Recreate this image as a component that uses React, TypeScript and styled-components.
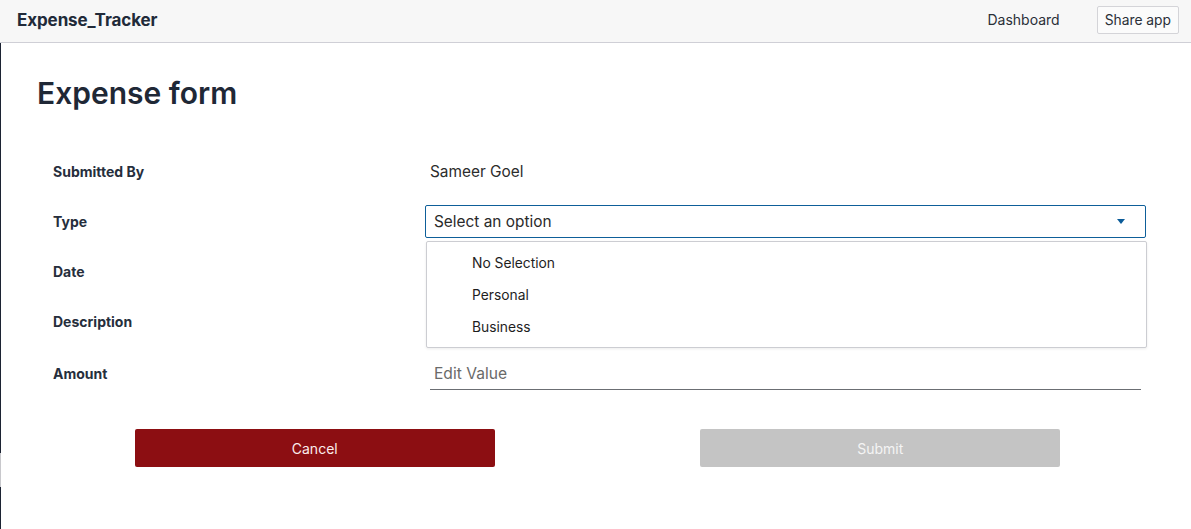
import React from 'react';
import styled, { createGlobalStyle } from 'styled-components';

const GlobalStyles = createGlobalStyle`
  html, body {
    margin: 0;
    padding: 0;
  }
  body {
    font-family: Inter, 'Noto Sans', sans-serif;
    color: #1f2836;
    background:
      linear-gradient(#1c2333, #1c2333) 0 0 / 1px 453px no-repeat,
      linear-gradient(#c8c8cc, #c8c8cc) 0 453px / 1px 34px no-repeat,
      linear-gradient(#1c2333, #1c2333) 0 487px / 1px 100% no-repeat,
      #ffffff;
    min-height: 529px;
  }
`;

const Header = styled.header`
  height: 43px;
  box-sizing: border-box;
  display: flex;
  align-items: center;
  justify-content: space-between;
  padding: 0 12px 3px 17px;
  background: #f7f7f7;
  border-bottom: 1px solid #cfcfd6;
`;

const Brand = styled.div`
  font-size: 17px;
  font-weight: 700;
  color: #212a39;
  letter-spacing: -0.1px;
`;

const Nav = styled.nav`
  display: flex;
  align-items: center;
  gap: 37px;
`;

const NavLink = styled.span`
  font-size: 14px;
  color: #2a2f38;
`;

const ShareButton = styled.button`
  font-family: inherit;
  font-size: 13.8px;
  color: #2a2f38;
  background: #fbfbfb;
  border: 1px solid #d4d4d8;
  border-radius: 2px;
  height: 28px;
  padding: 0 7px;
`;

const Main = styled.main`
  padding: 32px 0 0 0;
`;

const Title = styled.h1`
  margin: 0 0 35px 37px;
  font-size: 30px;
  line-height: 36px;
  font-weight: 600;
  color: #1f2836;
`;

const Form = styled.div`
  display: flex;
  flex-direction: column;
  padding: 0 45px 0 53px;
`;

const Row = styled.div<{ $h?: number }>`
  display: grid;
  grid-template-columns: 372px 1fr;
  align-items: center;
  height: ${(p) => p.$h ?? 50}px;
`;

const Label = styled.div`
  font-size: 14px;
  font-weight: 700;
  color: #262e3c;
`;

const Value = styled.div`
  font-size: 15.4px;
  color: #2c2c2c;
  padding-left: 5px;
`;

const SelectWrap = styled.div`
  position: relative;
`;

const SelectBox = styled.div`
  height: 33px;
  box-sizing: border-box;
  border: 1px solid #0e5f99;
  border-radius: 2px;
  display: flex;
  align-items: center;
  justify-content: space-between;
  padding: 0 20px 0 8px;
  font-size: 15.4px;
  color: #2a2a2a;
  background: #fff;
`;

const Caret = styled.span`
  width: 0;
  height: 0;
  border-left: 4px solid transparent;
  border-right: 4px solid transparent;
  border-top: 5px solid #0b5c99;
  margin-top: 1px;
`;

const Menu = styled.ul`
  position: absolute;
  top: calc(100% + 3px);
  left: 1px;
  right: -1px;
  margin: 0;
  padding: 5px 0 4px;
  list-style: none;
  background: #fff;
  border: 1px solid #cccdd2;
  border-radius: 2px;
  box-shadow: 0 1px 3px rgba(0, 0, 0, 0.08);
  z-index: 2;
`;

const Option = styled.li`
  height: 32px;
  display: flex;
  align-items: center;
  padding-left: 45px;
  font-size: 13.8px;
  color: #1e1e1e;
`;

const TextInput = styled.input`
  display: block;
  box-sizing: border-box;
  width: calc(100% - 10px);
  margin-left: 5px;
  height: 34px;
  border: none;
  border-bottom: 1px solid #6b6e73;
  padding: 2px 4px 0;
  font-family: inherit;
  font-size: 15.6px;
  color: #333;
  background: transparent;
  outline: none;
  &::placeholder {
    color: #6a6a6a;
  }
`;

const Actions = styled.div`
  display: grid;
  grid-template-columns: 1fr 1fr;
  justify-items: center;
  padding: 29px 28px 0 32px;
`;

const ActionButton = styled.button<{ $primary?: boolean }>`
  width: 360px;
  height: 38px;
  border: none;
  border-radius: 2px;
  font-family: inherit;
  font-size: 14px;
  color: ${(p) => (p.$primary ? '#f4f4f4' : '#fbecec')};
  background: ${(p) => (p.$primary ? '#c4c4c4' : '#8c0e12')};
`;

export default function App() {
  return (
    <>
      <GlobalStyles />
      <Header>
        <Brand>Expense_Tracker</Brand>
        <Nav>
          <NavLink>Dashboard</NavLink>
          <ShareButton>Share app</ShareButton>
        </Nav>
      </Header>
      <Main>
        <Title>Expense form</Title>
        <Form>
          <Row>
            <Label>Submitted By</Label>
            <Value>Sameer Goel</Value>
          </Row>
          <Row>
            <Label>Type</Label>
            <SelectWrap>
              <SelectBox>
                <span>Select an option</span>
                <Caret />
              </SelectBox>
              <Menu>
                <Option>No Selection</Option>
                <Option>Personal</Option>
                <Option>Business</Option>
              </Menu>
            </SelectWrap>
          </Row>
          <Row>
            <Label>Date</Label>
            <TextInput />
          </Row>
          <Row>
            <Label>Description</Label>
            <TextInput />
          </Row>
          <Row $h={54}>
            <Label>Amount</Label>
            <TextInput placeholder="Edit Value" />
          </Row>
        </Form>
        <Actions>
          <ActionButton>Cancel</ActionButton>
          <ActionButton $primary disabled>
            Submit
          </ActionButton>
        </Actions>
      </Main>
    </>
  );
}
